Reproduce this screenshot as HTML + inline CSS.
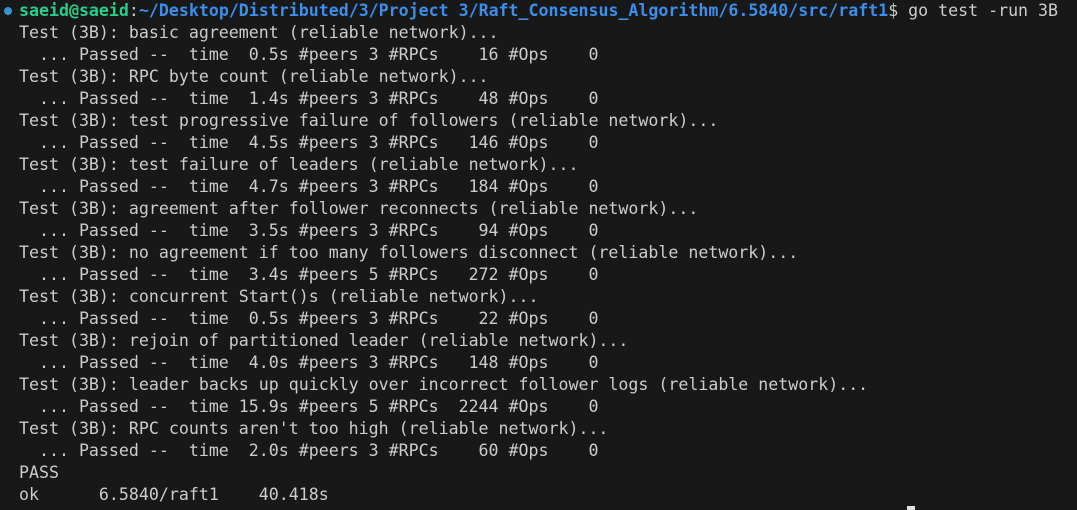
<!DOCTYPE html>
<html><head><meta charset="utf-8"><style>
html,body{margin:0;padding:0;background:#181818;width:1077px;height:510px;overflow:hidden}
pre{margin:0;position:absolute;left:19px;top:0;font-family:"DejaVu Sans Mono","Liberation Mono",monospace;font-size:16.6px;line-height:22px;color:#cccccc;white-space:pre}
.g{color:#23d18b;font-weight:bold}.b{color:#3b8eea;font-weight:bold}
.dot{position:absolute;left:4px;top:7px;width:8px;height:8px;border-radius:50%;background:#3794d1}
.cur{position:absolute;left:907px;top:506px;width:8px;height:4px;background:#e0e0e0}
</style></head><body>
<div class="dot"></div>
<pre><span class="g">saeid@saeid</span>:<span class="b">~/Desktop/Distributed/3/Project 3/Raft_Consensus_Algorithm/6.5840/src/raft1</span>$ go test -run 3B
Test (3B): basic agreement (reliable network)...
  ... Passed --  time  0.5s #peers 3 #RPCs    16 #Ops    0
Test (3B): RPC byte count (reliable network)...
  ... Passed --  time  1.4s #peers 3 #RPCs    48 #Ops    0
Test (3B): test progressive failure of followers (reliable network)...
  ... Passed --  time  4.5s #peers 3 #RPCs   146 #Ops    0
Test (3B): test failure of leaders (reliable network)...
  ... Passed --  time  4.7s #peers 3 #RPCs   184 #Ops    0
Test (3B): agreement after follower reconnects (reliable network)...
  ... Passed --  time  3.5s #peers 3 #RPCs    94 #Ops    0
Test (3B): no agreement if too many followers disconnect (reliable network)...
  ... Passed --  time  3.4s #peers 5 #RPCs   272 #Ops    0
Test (3B): concurrent Start()s (reliable network)...
  ... Passed --  time  0.5s #peers 3 #RPCs    22 #Ops    0
Test (3B): rejoin of partitioned leader (reliable network)...
  ... Passed --  time  4.0s #peers 3 #RPCs   148 #Ops    0
Test (3B): leader backs up quickly over incorrect follower logs (reliable network)...
  ... Passed --  time 15.9s #peers 5 #RPCs  2244 #Ops    0
Test (3B): RPC counts aren't too high (reliable network)...
  ... Passed --  time  2.0s #peers 3 #RPCs    60 #Ops    0
PASS
ok      6.5840/raft1    40.418s</pre>
<div class="cur"></div>
</body></html>
